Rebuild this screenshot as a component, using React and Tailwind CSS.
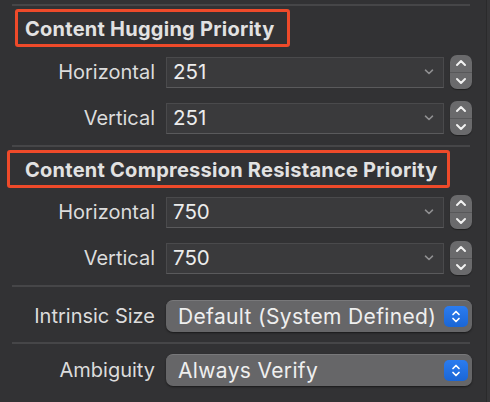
import React from "react";

const FONT = { fontFamily: "Inter, 'Noto Sans', sans-serif" };

const Separator = ({ className = "" }) => (
  <div className={`ml-[12px] w-[458px] h-[2px] bg-[#464648] ${className}`} />
);

const SectionTitle = ({ children, className = "" }) => (
  <div
    className={`h-[38px] flex items-center pt-[2px] border-[3px] border-[#ee4a2a] rounded-[3px] text-[20px] font-bold text-[#e2e2e2] tracking-[0.25px] ${className}`}
  >
    {children}
  </div>
);

const Stepper = () => (
  <div className="ml-[6px] w-[22px] h-[34px] rounded-[7px] bg-[#6a6a6c] flex flex-col shadow-[0_1px_1px_rgba(0,0,0,0.4)]">
    <div className="flex-1 flex items-center justify-center border-b border-[#58585a]">
      <svg width="12" height="8" viewBox="0 0 12 8">
        <path d="M2 6 L6 2 L10 6" fill="none" stroke="#f2f2f2" strokeWidth="2" strokeLinecap="round" strokeLinejoin="round" />
      </svg>
    </div>
    <div className="flex-1 flex items-center justify-center">
      <svg width="12" height="8" viewBox="0 0 12 8">
        <path d="M2 2 L6 6 L10 2" fill="none" stroke="#f2f2f2" strokeWidth="2" strokeLinecap="round" strokeLinejoin="round" />
      </svg>
    </div>
  </div>
);

const ComboRow = ({ label, value, className = "" }) => (
  <div className={`flex items-center h-[34px] ${className}`}>
    <div className="w-[155px] text-right text-[20px] text-[#dcdcdc] leading-none">{label}</div>
    <div className="ml-[11px] w-[278px] h-[31px] bg-[#3a3a3c] border border-[#4a4a4c] border-b-[#5a5a5c] flex items-center pl-[6px] pr-[9px]">
      <span className="flex-1 text-[20.5px] text-[#ececec] leading-none">{value}</span>
      <svg width="10" height="6" viewBox="0 0 10 6">
        <path d="M1.5 1.2 L5 4.5 L8.5 1.2" fill="none" stroke="#8f8f91" strokeWidth="1.6" strokeLinecap="round" strokeLinejoin="round" />
      </svg>
    </div>
    <Stepper />
  </div>
);

const PopupRow = ({ label, value, className = "" }) => (
  <div className={`flex items-center h-[32px] ${className}`}>
    <div className="w-[155px] text-right text-[20px] text-[#dcdcdc] leading-none">{label}</div>
    <div className="ml-[11px] w-[306px] h-[32px] rounded-[7px] bg-[#666668] border-t border-[#78787a] shadow-[0_1px_2px_rgba(0,0,0,0.5)] flex items-center pl-[12px] pr-[4px]">
      <span className="flex-1 text-[21px] tracking-[0.35px] text-[#efefef] leading-none">{value}</span>
      <div className="w-[24px] h-[21px] rounded-[5px] bg-[#1f6fe0] bg-gradient-to-b from-[#2b7cf0] to-[#1a66d6] flex items-center justify-center">
        <svg width="10" height="15" viewBox="0 0 10 15">
          <path d="M2 5.5 L5 2.5 L8 5.5" fill="none" stroke="#ffffff" strokeWidth="1.7" strokeLinecap="round" strokeLinejoin="round" />
          <path d="M2 9.5 L5 12.5 L8 9.5" fill="none" stroke="#ffffff" strokeWidth="1.7" strokeLinecap="round" strokeLinejoin="round" />
        </svg>
      </div>
    </div>
  </div>
);

export default function App() {
  return (
    <div className="w-[490px] h-[402px] bg-[#323234] flex overflow-hidden" style={FONT}>
      <div className="w-[486px] pt-[4px]">
        <Separator />

        {/* Content Hugging Priority */}
        <SectionTitle className="mt-[3px] ml-[15px] w-[275px] pl-[7px]">
          Content Hugging Priority
        </SectionTitle>
        <ComboRow label="Horizontal" value="251" className="mt-[8px]" />
        <ComboRow label="Vertical" value="251" className="mt-[12px]" />

        <Separator className="mt-[10px]" />

        {/* Content Compression Resistance Priority */}
        <SectionTitle className="mt-[3px] ml-[7px] w-[443px] pl-[15px]">
          Content Compression Resistance Priority
        </SectionTitle>
        <ComboRow label="Horizontal" value="750" className="mt-[7px]" />
        <ComboRow label="Vertical" value="750" className="mt-[12px]" />

        <Separator className="mt-[10px]" />

        <PopupRow label="Intrinsic Size" value="Default (System Defined)" className="mt-[13px]" />

        <Separator className="mt-[10px]" />

        <PopupRow label="Ambiguity" value="Always Verify" className="mt-[10px]" />
      </div>
      <div className="flex-1 border-l border-[#2a2a2b] bg-[#363638]" />
    </div>
  );
}
